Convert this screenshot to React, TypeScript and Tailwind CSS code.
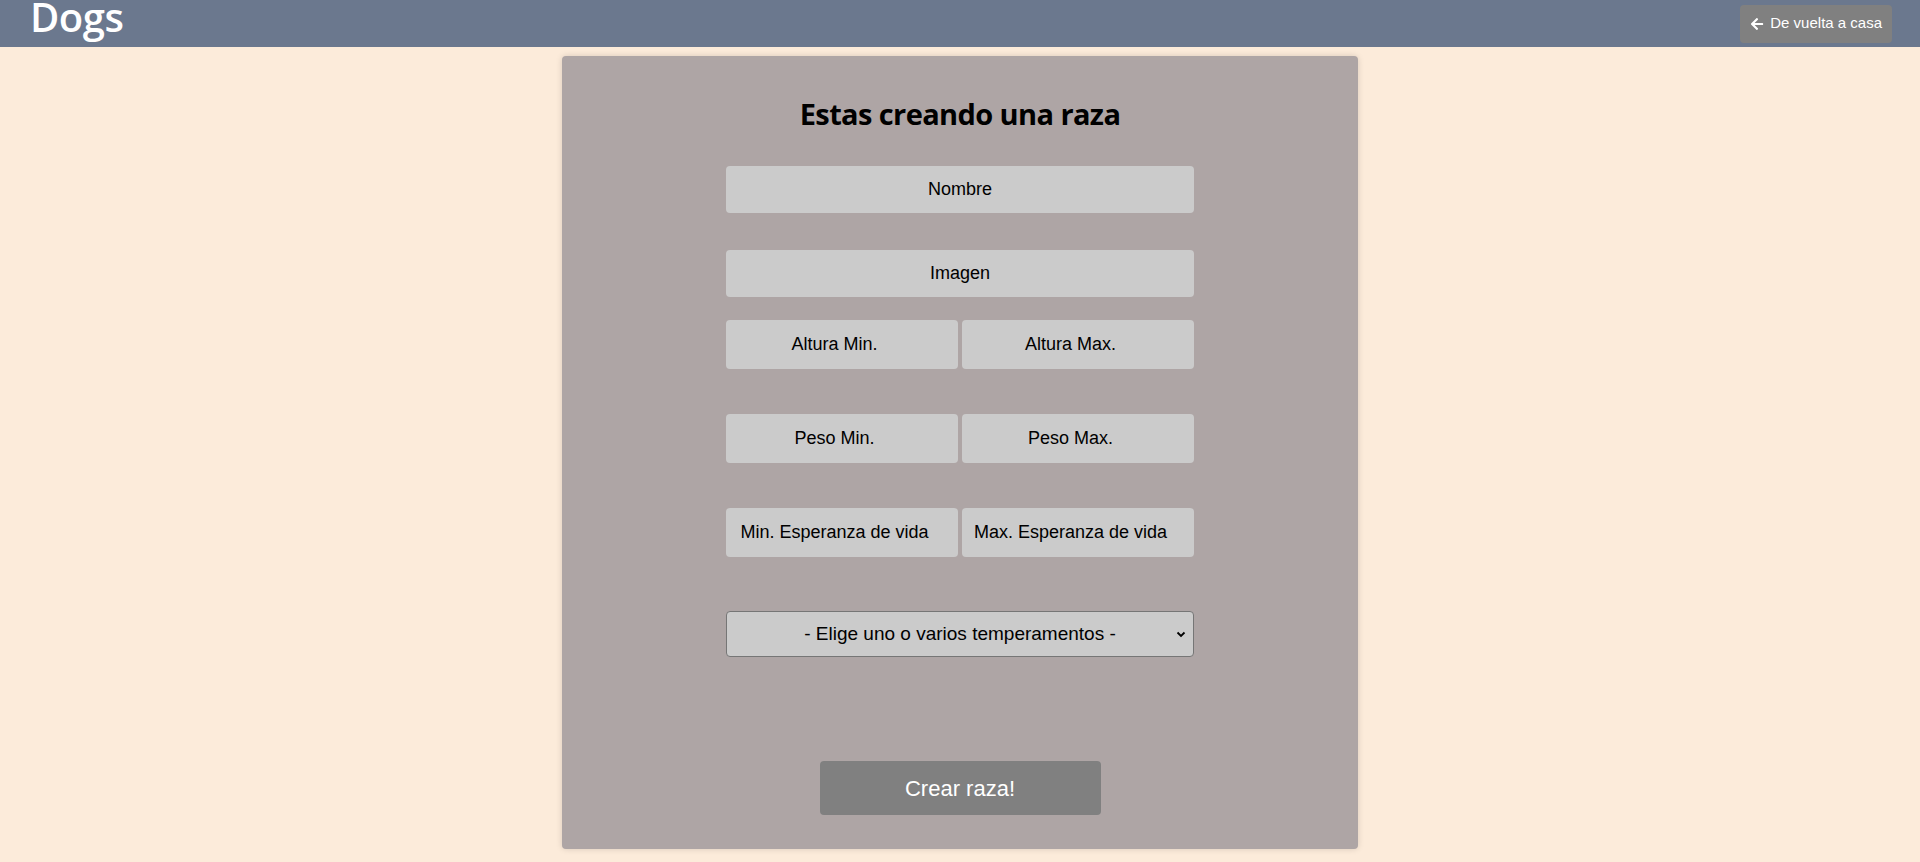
import { FaArrowLeft } from 'react-icons/fa';

const inputClass =
  'h-full w-full rounded-[4px] bg-[#cbcbcb] text-center text-[18px] text-black outline-none placeholder:text-black';

const halfClass =
  'h-full w-full rounded-[4px] bg-[#cbcbcb] pr-[15px] text-center text-[18px] text-black outline-none placeholder:text-black';

export default function App() {
  return (
    <div className="min-h-screen bg-[#fcebda] font-['Liberation_Sans',Arial,sans-serif]">
      <header className="flex h-[47px] items-center justify-between bg-[#6b788e] pl-[30px] pr-[28px]">
        <h1 className="self-start font-['Open_Sans',sans-serif] text-[40px] leading-[34px] font-semibold tracking-[-0.5px] text-white">
          Dogs
        </h1>
        <button className="flex h-[38px] items-center gap-[6px] rounded-[4px] bg-[#808080] px-[10px] text-[15px] text-white">
          <FaArrowLeft className="h-[14px] w-[14px]" />
          De vuelta a casa
        </button>
      </header>

      <main className="flex justify-center pt-[9px]">
        <form className="flex w-[796px] flex-col items-center rounded-[4px] bg-[#aea5a5] pt-[40px] pb-[34px] shadow-[0_0_6px_rgba(0,0,0,0.15)]">
          <h2 className="font-['Open_Sans',sans-serif] text-[29px] leading-[36px] font-bold tracking-[-0.6px] text-black">
            Estas creando una raza
          </h2>

          <div className="mt-[34px] flex w-[468px] flex-col">
            <div className="h-[47px]">
              <input className={inputClass} placeholder="Nombre" />
            </div>
            <div className="mt-[37px] h-[47px]">
              <input className={inputClass} placeholder="Imagen" />
            </div>

            <div className="mt-[23px] grid h-[49px] grid-cols-2 gap-[4px]">
              <input className={halfClass} placeholder="Altura Min." />
              <input className={halfClass} placeholder="Altura Max." />
            </div>
            <div className="mt-[45px] grid h-[49px] grid-cols-2 gap-[4px]">
              <input className={halfClass} placeholder="Peso Min." />
              <input className={halfClass} placeholder="Peso Max." />
            </div>
            <div className="mt-[45px] grid h-[49px] grid-cols-2 gap-[4px]">
              <input className={halfClass} placeholder="Min. Esperanza de vida" />
              <input className={halfClass} placeholder="Max. Esperanza de vida" />
            </div>

            <div className="relative mt-[54px] h-[46px]">
              <select className="h-full w-full appearance-none rounded-[4px] border border-[#767676] bg-[#cbcbcb] text-center text-[19px] text-black outline-none">
                <option>- Elige uno o varios temperamentos -</option>
              </select>
              <svg
                className="pointer-events-none absolute top-1/2 right-[8px] h-[10px] w-[10px] -translate-y-1/2"
                viewBox="0 0 10 10"
                fill="none"
                stroke="black"
                strokeWidth="1.8"
              >
                <path d="M1.5 3.5 L5 7 L8.5 3.5" />
              </svg>
            </div>
          </div>

          <button
            type="button"
            className="mt-[104px] h-[54px] w-[281px] rounded-[4px] bg-[#808080] text-[22px] text-white"
          >
            Crear raza!
          </button>
        </form>
      </main>
    </div>
  );
}
